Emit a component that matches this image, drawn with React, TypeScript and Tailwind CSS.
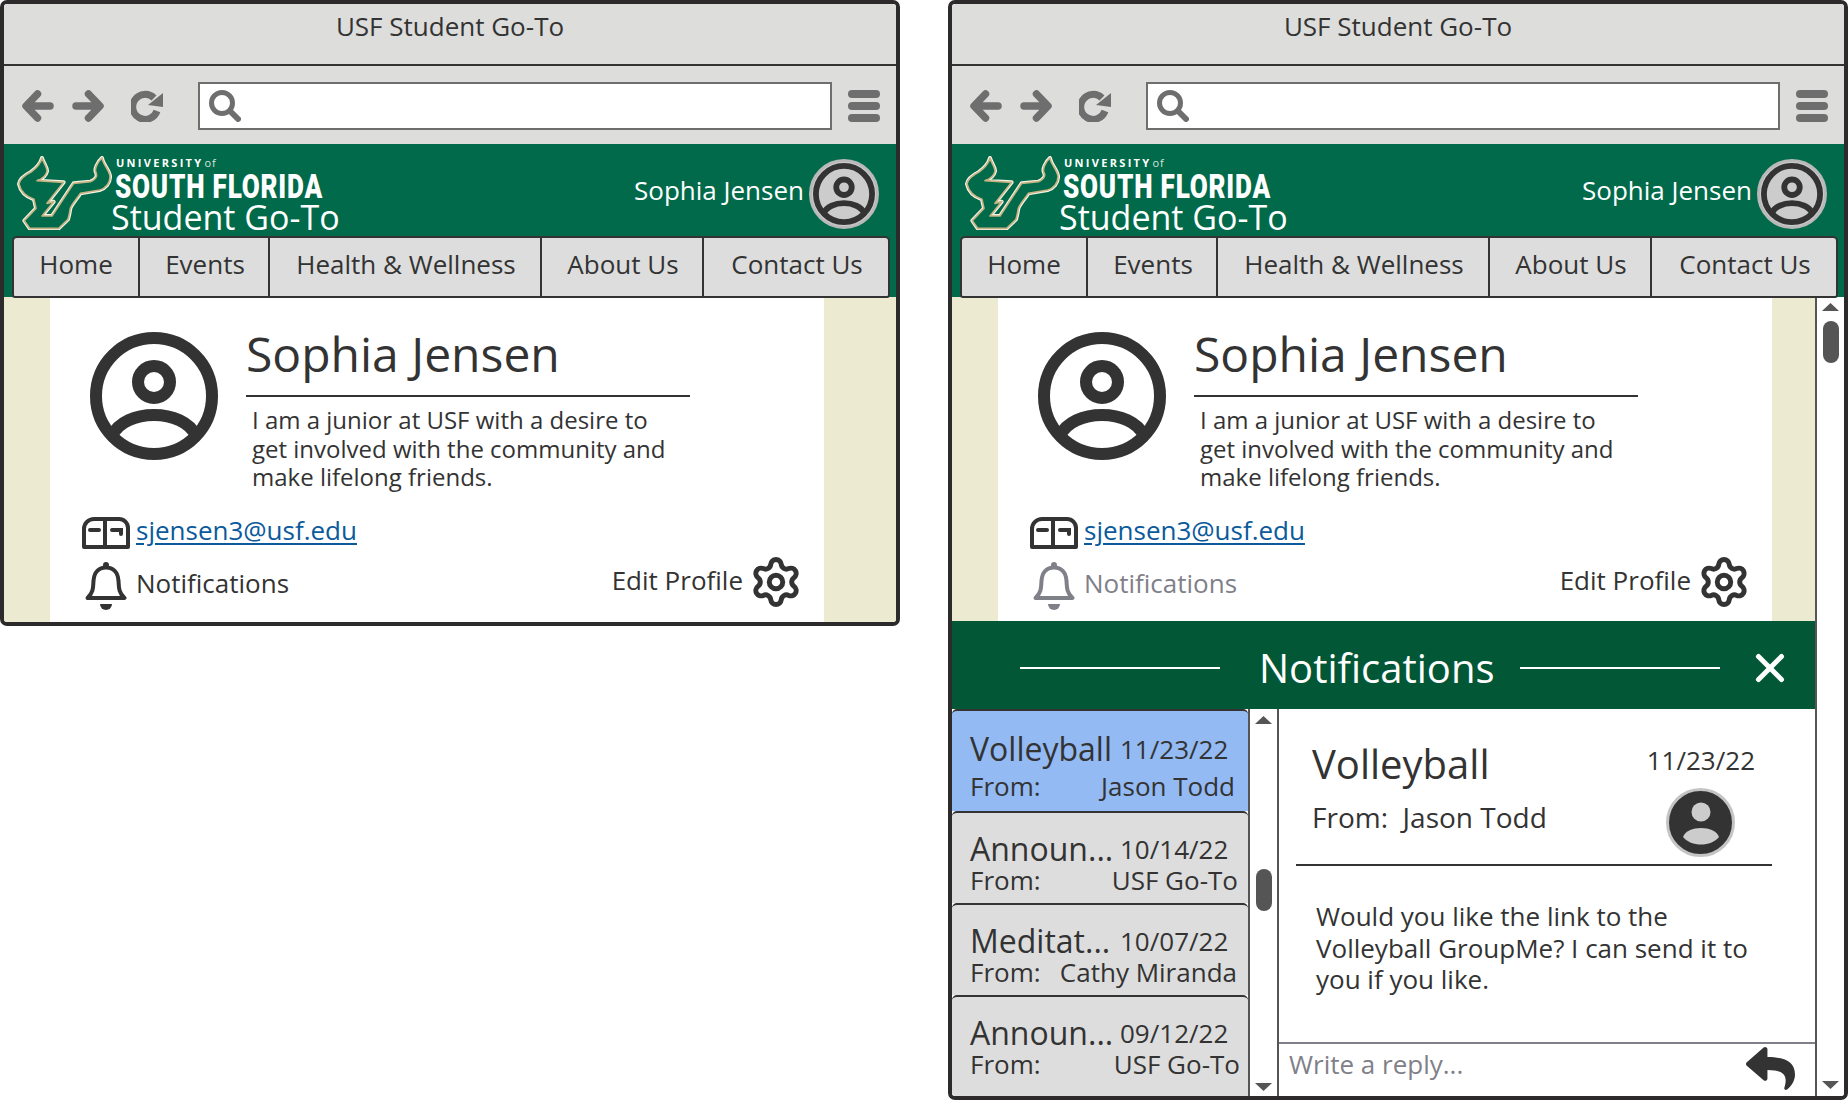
import { Settings, X } from "lucide-react";
import { FaReply } from "react-icons/fa";

const navItems = [
  { label: "Home", width: "w-[126px]" },
  { label: "Events", width: "w-[130px] pl-[2px]" },
  { label: "Health & Wellness", width: "w-[272px] pl-[2px]" },
  { label: "About Us", width: "w-[162px] pl-[2px]" },
  { label: "Contact Us", width: "flex-1 pl-[2px]" },
];

const messages = [
  { title: "Volleyball", date: "11/23/22", from: "Jason Todd", height: "h-[102px]", fromPad: "pr-[13px]", active: true, rowTop: "pt-[22px]", gap: "mt-[6px]" },
  { title: "Announ...", date: "10/14/22", from: "USF Go-To", height: "h-[92px]", fromPad: "pr-[10px]", active: false, rowTop: "pt-[20px]", gap: "mt-0" },
  { title: "Meditat...", date: "10/07/22", from: "Cathy Miranda", height: "h-[92px]", fromPad: "pr-[11px]", active: false, rowTop: "pt-[20px]", gap: "mt-0" },
  { title: "Announ...", date: "09/12/22", from: "USF Go-To", height: "h-[101px]", fromPad: "pr-[8px]", active: false, rowTop: "pt-[20px]", gap: "mt-0" },
];

const ProfileIcon = ({ size }: { size: number }) => (
  <svg width={size} height={size} viewBox="0 0 128 128" fill="none" stroke="#333333" strokeWidth="12">
    <circle cx="64" cy="64" r="58" />
    <circle cx="64" cy="50" r="16" />
    <path d="M22 104C34 76 94 76 106 104" />
  </svg>
);

const BullLogo = () => (
  <svg width="95" height="74" viewBox="50 48 285 222" className="shrink-0">
    {[
      { stroke: "#f6f3e8", width: 12 },
      { stroke: "#c4b483", width: 5 },
    ].map((s) => (
      <path
        key={s.stroke}
        d="M125 54C130 70 142 84 140 94C136 110 122 118 110 122L190 127L140 190L160 185L125 228L155 228L220 130L270 125C284 120 292 110 288 100C280 88 292 66 305 54C308 74 326 88 329 108C330 130 314 146 298 150L240 160C230 176 216 190 210 205C208 218 206 228 203 238L175 265L88 265L72 242L107 205L101 178C84 172 62 160 56 132C58 116 76 104 92 96C106 86 120 72 125 54Z"
        fill="#006a4a"
        stroke={s.stroke}
        strokeWidth={s.width}
        strokeLinejoin="round"
      />
    ))}
  </svg>
);

const MailIcon = ({ color }: { color: string }) => (
  <svg width="48" height="32" viewBox="0 0 48 32" fill="none" stroke={color} strokeWidth="4">
    <path d="M2 30V12A10 10 0 0 1 12 2H37A9 9 0 0 1 46 11V30Z" strokeLinejoin="round" />
    <path d="M23 3V30M8 13H17M30 13H39V17" strokeLinecap="round" />
  </svg>
);

const BellIcon = ({ color }: { color: string }) => (
  <svg width="42" height="48" viewBox="0 0 42 48" fill="none" stroke={color} strokeWidth="4">
    <path d="M2.5 36C9 30 8 24 8.5 19C9 10 14 5.5 21 5.5C28 5.5 33 10 33.5 19C34 24 33 30 39.5 36Z" strokeLinejoin="round" />
    <circle cx="21" cy="3" r="3" fill={color} stroke="none" />
    <path d="M15 42H27A6 6 0 0 1 15 42Z" fill={color} stroke="none" />
  </svg>
);

const ArrowIcon = ({ flip }: { flip?: boolean }) => (
  <svg width="32" height="32" viewBox="0 0 32 32" fill="none" stroke="#6e6e6e" strokeWidth="7.5" strokeLinecap="round" strokeLinejoin="round" className={flip ? "-scale-x-100" : ""}>
    <path d="M28 16H5M15.5 4L4 16L15.5 28" />
  </svg>
);

const RefreshIcon = () => (
  <svg width="32" height="32" viewBox="0 0 32 32" className="ml-[27px]">
    <path d="M23 8A12.5 12.5 0 1 0 26 21" fill="none" stroke="#6e6e6e" strokeWidth="7" />
    <polygon points="32,3 32,17 17,15" fill="#6e6e6e" />
  </svg>
);

const SearchIcon = () => (
  <svg width="32" height="32" viewBox="0 0 32 32" fill="none" stroke="#6e6e6e" strokeLinecap="round">
    <circle cx="13" cy="13" r="10.5" strokeWidth="5" />
    <path d="M21 21L29 29" strokeWidth="6" />
  </svg>
);

const ScrollArrow = ({ up }: { up?: boolean }) => (
  <svg width="17" height="8" viewBox="0 0 17 8" fill="#555555">
    <polygon points={up ? "8.5,0 17,8 0,8" : "0,0 17,0 8.5,8"} />
  </svg>
);

const Chrome = () => (
  <>
    <div className="flex h-[60px] justify-center bg-[#dddddc] pt-[3px] text-[26px] leading-[38px] text-[#333333]">
      USF Student Go-To
    </div>
    <div className="flex h-[80px] items-center border-t-2 border-[#333333] bg-[#dddddc] pt-[2px] text-[#6e6e6e]">
      <div className="ml-[18px]">
        <ArrowIcon />
      </div>
      <div className="ml-[18px]">
        <ArrowIcon flip />
      </div>
      <RefreshIcon />
      <div className="ml-[35px] flex h-[48px] w-[634px] items-center border-2 border-[#6e6e6e] bg-white pl-[9px]">
        <SearchIcon />
      </div>
      <div className="ml-[16px] flex w-[32px] flex-col gap-[4px]">
        <span className="h-[8px] rounded-full bg-[#6e6e6e]" />
        <span className="h-[8px] rounded-full bg-[#6e6e6e]" />
        <span className="h-[8px] rounded-full bg-[#6e6e6e]" />
      </div>
    </div>
  </>
);

const SiteHeader = () => (
  <div className="relative -mx-[2px] h-[153px] bg-[#006a4a] pl-[10px] pr-[6px] pt-[12px]">
    <div className="flex h-[80px] items-start">
      <div className="ml-[5px] shrink-0">
        <BullLogo />
      </div>
      <div className="-ml-[1px] mt-[1px] flex flex-col text-white">
        <span className="h-[12px] pl-[5px] text-[11px] font-bold leading-[12px] tracking-[2.3px]">
          UNIVERSITY<span className="ml-[1px] font-normal tracking-[1px] text-[#d8e6df]">of</span>
        </span>
        <span className="mt-[5px] h-[26px] w-fit origin-left scale-x-[0.79] whitespace-nowrap pl-[5px] font-['Roboto'] text-[33px] font-black leading-[26px] tracking-[1px]">
          SOUTH FLORIDA
        </span>
        <span className="text-[34px] leading-[34px]">Student Go-To</span>
      </div>
      <div className="ml-auto mr-[13px] mt-[3px] flex items-center gap-[5px] text-white">
        <span className="-mt-[7px] text-[26px]">Sophia Jensen</span>
        <div className="flex size-[70px] items-center justify-center rounded-full border-[3px] border-[#b9b9b9] bg-[#cccccc]">
          <ProfileIcon size={62} />
        </div>
      </div>
    </div>
    <div className="flex h-[62px] w-[878px] rounded-t-[5px] rounded-b-[3px] border-2 border-[#333333] bg-[#dddddd] text-[26px] text-[#333333]">
      {navItems.map((item) => (
        <div key={item.label} className={`flex items-center justify-center border-r-2 border-[#333333] pb-[5px] last:border-r-0 ${item.width}`}>
          {item.label}
        </div>
      ))}
    </div>
  </div>
);

const Profile = ({ muted }: { muted?: boolean }) => {
  const bell = muted ? "#808089" : "#333333";
  return (
    <div className="flex h-[325px]">
      <div className="w-[46px] bg-[#ecead1]" />
      <div className="w-[774px] bg-white text-[#333333]">
        <div className="flex pl-[40px] pt-[16px]">
          <div className="mt-[19px]">
            <ProfileIcon size={128} />
          </div>
          <div className="ml-[28px] w-[444px]">
            <div className="h-[84px] border-b-2 border-[#333333] pt-[8px] text-[48px] leading-[66px]">Sophia Jensen</div>
            <p className="pl-[6px] pt-[9px] text-[24px] leading-[28.5px]">
              I am a junior at USF with a desire to
              <br />
              get involved with the community and
              <br />
              make lifelong friends.
            </p>
          </div>
        </div>
        <div className="mt-[24px] flex h-[34px] items-center pl-[32px]">
          <MailIcon color="#333333" />
          <a className="ml-[6px] -mt-[5px] text-[26px] text-[#0b5a9c] underline underline-offset-[3px]">sjensen3@usf.edu</a>
        </div>
        <div className="mt-[10px] flex items-start justify-between pl-[35px] pr-[23px]">
          <div className="mt-[2px] flex items-center gap-[9px]" style={{ color: bell }}>
            <BellIcon color={bell} />
            <span className="-mt-[4px] text-[26px]">Notifications</span>
          </div>
          <div className="-mt-[3px] flex items-center gap-[8px]">
            <span className="-mt-[2px] text-[26px]">Edit Profile</span>
            <Settings size={54} strokeWidth={2.2} className="-m-[2px]" color="#333333" />
          </div>
        </div>
      </div>
      <div className="flex-1 bg-[#ecead1]" />
    </div>
  );
};

const ScrollTrack = ({ thumb, className }: { thumb: string; className: string }) => (
  <div className={`flex flex-col items-center bg-white ${className}`}>
    <ScrollArrow up />
    <div className={`w-[16px] rounded-full bg-[#555555] ${thumb}`} />
    <div className="mt-auto">
      <ScrollArrow />
    </div>
  </div>
);

const MessageList = () => (
  <div className="w-[296px] shrink-0">
    {messages.map((m) => (
      <div
        key={m.date}
        className={`${m.height} rounded-t-[5px] border-t-2 border-[#333333] pl-[18px] text-[#333333] ${m.active ? "bg-[#93baf3]" : "bg-[#dddddd]"} ${m.rowTop}`}
      >
        <div className="flex items-center">
          <span className="w-[150px] shrink-0 whitespace-nowrap text-[32px] leading-[32px]">{m.title}</span>
          <span className="text-[26px] leading-[32px]">{m.date}</span>
        </div>
        <div className={`flex justify-between text-[26px] leading-[30px] ${m.fromPad} ${m.gap}`}>
          <span>From:</span>
          <span className="whitespace-nowrap">{m.from}</span>
        </div>
      </div>
    ))}
  </div>
);

const MessageDetail = () => (
  <div className="flex min-w-0 flex-1 flex-col bg-white text-[#333333]">
    <div className="flex-1 pl-[17px] pr-[43px]">
      <div className="flex h-[157px] items-start justify-between border-b-2 border-[#333333] pl-[16px] pr-[17px]">
        <div className="pt-[29px]">
          <div className="text-[40px] leading-[52px]">Volleyball</div>
          <div className="mt-[9px] text-[28px] leading-[36px]">From:&nbsp; Jason Todd</div>
        </div>
        <div className="flex flex-col items-center pt-[33px]">
          <span className="text-[26px] leading-[36px]">11/23/22</span>
          <div className="mt-[10px] flex size-[69px] items-center justify-center rounded-full border-[3px] border-[#c4c4c4] bg-[#333333]">
            <svg width="40" height="44" viewBox="0 0 40 44" fill="#cccccc">
              <circle cx="20" cy="11" r="9.5" />
              <path d="M2 36C6 24 34 24 38 36C30 46 10 46 2 36Z" />
            </svg>
          </div>
        </div>
      </div>
      <p className="pl-[20px] pt-[35px] text-[26px] leading-[31.5px]">
        Would you like the link to the
        <br />
        Volleyball GroupMe? I can send it to
        <br />
        you if you like.
      </p>
    </div>
    <div className="flex h-[54px] items-center justify-between border-t-2 border-[#808089] pl-[10px] pr-[20px]">
      <span className="-mt-[11px] text-[26px] text-[#808089]">Write a reply...</span>
      <FaReply size={49} color="#333333" className="-mt-[3px]" />
    </div>
  </div>
);

const NotificationsPanel = () => (
  <div className="flex flex-1 flex-col">
    <div className="flex h-[88px] items-center bg-[#025736] pt-[5px] text-white">
      <span className="ml-[68px] h-[2px] w-[200px] bg-white" />
      <span className="ml-[39px] w-[234px] whitespace-nowrap text-[40px] leading-[52px]">Notifications</span>
      <span className="ml-[27px] h-[2px] w-[200px] bg-white" />
      <X size={46} strokeWidth={2.6} className="ml-[27px]" />
    </div>
    <div className="flex min-h-0 flex-1">
      <MessageList />
      <ScrollTrack thumb="mt-[145px] h-[42px]" className="w-[31px] border-x-2 border-[#555555] pb-[5px] pt-[7px]" />
      <MessageDetail />
    </div>
  </div>
);

const Window = ({ height, children }: { height: string; children: React.ReactNode }) => (
  <div className={`flex w-[900px] flex-col overflow-hidden rounded-[7px] border-4 border-[#2c2a2a] ${height}`}>
    {children}
  </div>
);

export default function App() {
  return (
    <div className="flex items-start gap-[48px] bg-white font-['Open_Sans',sans-serif]">
      <Window height="h-[626px]">
        <Chrome />
        <SiteHeader />
        <Profile />
      </Window>
      <Window height="h-[1100px]">
        <Chrome />
        <SiteHeader />
        <div className="flex min-h-0 flex-1">
          <div className="flex w-[863px] flex-col">
            <Profile muted />
            <NotificationsPanel />
          </div>
          <ScrollTrack thumb="mt-[10px] h-[42px]" className="flex-1 border-l-2 border-[#555555] pb-[7px] pt-[6px]" />
        </div>
      </Window>
    </div>
  );
}
